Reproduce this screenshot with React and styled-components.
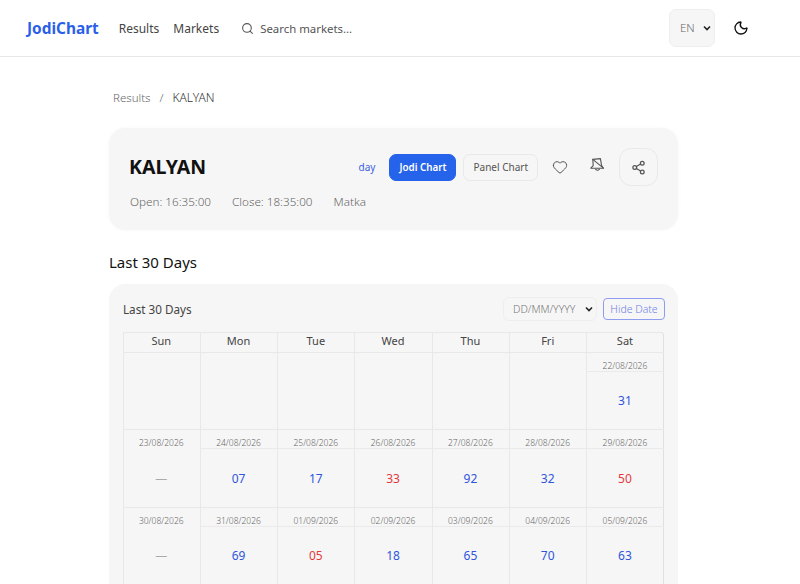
import React from "react";
import styled, { createGlobalStyle } from "styled-components";
import { Search, Moon, Heart, Share2 } from "lucide-react";

const Global = createGlobalStyle`
  html, body { margin: 0; padding: 0; background: #fff; height: 584px; overflow: hidden; }
  body { font-family: "Noto Sans", sans-serif; color: #111; }
  * { box-sizing: border-box; }
`;
const Page = styled.div`width: 800px; height: 584px; overflow: hidden;`;
const Header = styled.header`
  height: 57px; border-bottom: 1px solid #e8e8e8; display: flex; align-items: center;
  padding: 0 51px 0 27px;
`;
const Logo = styled.div`font-size: 15.4px; font-weight: 700; color: #2b5fe8; margin-right: 20px;`;
const NavLink = styled.a`font-size: 12px; color: #444; margin-right: 14px;`;
const SearchBox = styled.div`
  display: flex; align-items: center; gap: 6px; margin-left: 8px; flex: 1;
  font-size: 11.4px; color: #555; svg { color: #555; }
`;
const LangSelect = styled.div`
  width: 46px; height: 38px; margin-top: -1px; border-radius: 7px; background: #f6f6f6; border: 1px solid #eee;
  display: flex; align-items: center; justify-content: space-between; padding: 0 2px 0 10px;
  font-size: 11.5px; font-weight: 300; color: #666;
`;
const ThemeButton = styled.div`margin-left: 18px; display: flex; color: #111;`;
const Main = styled.main`width: 569px; margin-left: 109px;`;
const Crumbs = styled.nav`
  display: flex; gap: 9px; padding: 33px 0 0 4px; height: 71px; font-size: 11.5px; font-weight: 300; color: #666; line-height: 16px;
`;
const CrumbCurrent = styled.span`color: #333; font-size: 12px;`;
const HeroCard = styled.section`
  background: #f6f6f6; border-radius: 16px; height: 102px; padding: 20px 20px 0 20px;
  box-shadow: 0 0 4px rgba(0,0,0,0.03);
`;
const HeroTop = styled.div`display: flex; align-items: center; height: 38px;`;
const Title = styled.h1`font-size: 19.5px; font-weight: 700; color: #111; margin: 0; flex: 1; line-height: 38px;`;
const DayLink = styled.span`font-size: 10px; color: #3b5fe0; margin-right: 14px;`;
const ChartButton = styled.div`
  height: 27px; display: flex; align-items: center; justify-content: center; border-radius: 7px;
  font-size: ${p => (p.$active ? 9.8 : 10)}px; padding: 0 9px; margin-right: 7px;
  font-weight: ${p => (p.$active ? 600 : 400)};
  color: ${p => (p.$active ? "#fff" : "#555")};
  background: ${p => (p.$active ? "#2563eb" : "#f6f6f6")};
  border: 1px solid ${p => (p.$active ? "#2563eb" : "#e9e9e9")};
`;
const IconAction = styled.div`
  width: ${p => p.$w}px; height: 38px; display: flex; align-items: center; justify-content: center; color: #555;
  border-radius: 12px; border: 1px solid ${p => (p.$framed ? "#e9e9e9" : "transparent")};
`;
const Meta = styled.div`
  display: flex; gap: 21px; margin-top: 7px; padding-left: 1px; font-size: 11.7px; font-weight: 300; color: #666; line-height: 16px;
`;
const SectionTitle = styled.h2`
  font-size: 15px; font-weight: 400; color: #111; margin: 0; padding-top: 22px; height: 54px; line-height: 20px;
`;
const TableCard = styled.section`
  background: #f6f6f6; border-radius: 16px; padding: 14px 13px 0 14px; height: 320px;
`;
const TableBar = styled.div`display: flex; align-items: center; height: 22px; margin-bottom: 12px;`;
const TableTitle = styled.div`font-size: 11.7px; color: #444; flex: 1;`;
const DateSelect = styled.div`
  width: 94px; height: 24px; border-radius: 6px; border: 1px solid #eee; display: flex; align-items: center;
  justify-content: space-between; padding: 0 2px 0 9px; font-size: 10.4px; font-weight: 300; color: #777; margin-right: 6px;
`;
const HideButton = styled.div`
  width: 62px; height: 22px; border-radius: 4px; border: 1px solid #8f9cf0; color: #6f7fe6; font-size: 10.5px;
  display: flex; align-items: center; justify-content: center; font-weight: 300;
`;
const Grid = styled.div`
  display: grid; grid-template-columns: repeat(7, 1fr); width: 541px; margin-left: -0.4px; border-radius: 4px 4px 0 0;
  box-shadow: inset -1px 0 #e0e0e0, inset 0 1px #e8e8e8;
`;
const HeadCell = styled.div`
  height: 21px; padding: 0 1px 3px 0; font-size: 11px; color: #444; display: flex; align-items: center; justify-content: center;
  border-left: 1px solid #e8e8e8; border-bottom: 1px solid #e8e8e8;
`;
const DayCell = styled.div`
  height: 77.4px; display: flex; flex-direction: column;
  border-left: 1px solid #e8e8e8; border-bottom: 1px solid #e8e8e8;
`;
const DateLabel = styled.div`
  height: 19px; padding: 7px 1px 0 0; flex: none; font-size: 8.5px; font-weight: 300; color: #666; display: flex; align-items: center; justify-content: center;
  border-bottom: 1px solid ${p => (p.$plain ? "transparent" : "#eaeaea")};
`;
const Value = styled.div`
  flex: 1; padding-right: 1px; display: flex; align-items: center; justify-content: center; font-size: 12px;
  color: ${p => (p.$c === "r" ? "#e5383b" : p.$c === "m" ? "#aaa" : "#2f55dd")};
`;
const BellIcon = styled.svg`margin-top: -5px;`;

const heads = ["Sun", "Mon", "Tue", "Wed", "Thu", "Fri", "Sat"];
const rows = [
  [null, null, null, null, null, null, ["22/08/2026", "31", "b"]],
  [["23/08/2026", "—", "m"], ["24/08/2026", "07", "b"], ["25/08/2026", "17", "b"], ["26/08/2026", "33", "r"], ["27/08/2026", "92", "b"], ["28/08/2026", "32", "b"], ["29/08/2026", "50", "r"]],
  [["30/08/2026", "—", "m"], ["31/08/2026", "69", "b"], ["01/09/2026", "05", "r"], ["02/09/2026", "18", "b"], ["03/09/2026", "65", "b"], ["04/09/2026", "70", "b"], ["05/09/2026", "63", "b"]],
];

const Caret = () => (
  <svg width="10" height="10" viewBox="0 0 10 10" fill="none" stroke="#222" strokeWidth="1.6"><path d="M2 3.5 5 6.5 8 3.5" /></svg>
);
const SlantBell = () => (
  <BellIcon width="16" height="16" viewBox="0 0 16 16" fill="none" stroke="#555" strokeWidth="1.1" strokeLinejoin="round" strokeLinecap="round">
    <path d="M3.8 2.4 11.4 1.6 12.6 8.6 14.4 11.2 1.8 11.2 4.2 8.6Z" />
    <path d="M3.8 2.4 14.4 11.2" />
    <path d="M6.6 12.4Q8.4 14 10.4 12.4" />
  </BellIcon>
);

export default function App() {
  return (
    <Page>
      <Global />
      <Header>
        <Logo>JodiChart</Logo>
        <NavLink>Results</NavLink>
        <NavLink>Markets</NavLink>
        <SearchBox><Search size={13} />Search markets...</SearchBox>
        <LangSelect>EN<Caret /></LangSelect>
        <ThemeButton><Moon size={16} /></ThemeButton>
      </Header>
      <Main>
        <Crumbs><span>Results</span><span>/</span><CrumbCurrent>KALYAN</CrumbCurrent></Crumbs>
        <HeroCard>
          <HeroTop>
            <Title>KALYAN</Title>
            <DayLink>day</DayLink>
            <ChartButton $active>Jodi Chart</ChartButton>
            <ChartButton>Panel Chart</ChartButton>
            <IconAction $w={30}><Heart size={16} strokeWidth={1.5} /></IconAction>
            <IconAction $w={44}><SlantBell /></IconAction>
            <IconAction $w={39} $framed><Share2 size={15} /></IconAction>
          </HeroTop>
          <Meta><span>Open: 16:35:00</span><span>Close: 18:35:00</span><span>Matka</span></Meta>
        </HeroCard>
        <SectionTitle>Last 30 Days</SectionTitle>
        <TableCard>
          <TableBar>
            <TableTitle>Last 30 Days</TableTitle>
            <DateSelect>DD/MM/YYYY<Caret /></DateSelect>
            <HideButton>Hide Date</HideButton>
          </TableBar>
          <Grid>
            {heads.map(h => <HeadCell key={h}>{h}</HeadCell>)}
            {rows.flat().map((c, i) => (
              <DayCell key={i}>
                {c && <DateLabel $plain={c[2] === "m"}>{c[0]}</DateLabel>}
                {c && <Value $c={c[2]}>{c[1]}</Value>}
              </DayCell>
            ))}
          </Grid>
        </TableCard>
      </Main>
    </Page>
  );
}
